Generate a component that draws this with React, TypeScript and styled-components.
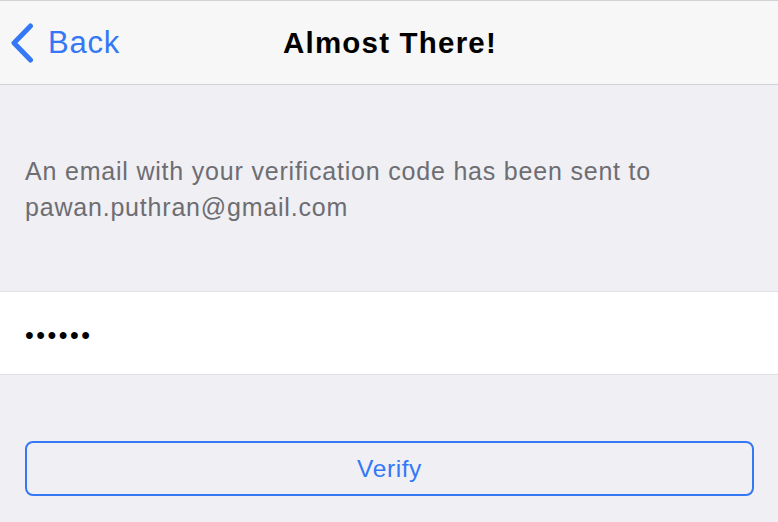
import React from 'react';
import styled, { createGlobalStyle } from 'styled-components';

const colors = {
  blue: '#3478f6',
  navBg: '#f7f7f7',
  pageBg: '#efeff4',
  hairline: '#d2d2d6',
  fieldLine: '#e0e0e4',
  grey: '#6d6d72',
};

const GlobalStyle = createGlobalStyle`
  html, body {
    margin: 0;
    padding: 0;
    background: ${colors.pageBg};
    font-family: 'Liberation Sans', Arial, sans-serif;
  }
`;

const Screen = styled.div`
  width: 778px;
  height: 522px;
  overflow: hidden;
  background: ${colors.pageBg};
  display: flex;
  flex-direction: column;
`;

const NavBar = styled.header`
  position: relative;
  height: 83px;
  background: ${colors.navBg};
  border-top: 1px solid ${colors.hairline};
  border-bottom: 1px solid ${colors.hairline};
  display: flex;
  align-items: center;
  justify-content: center;
`;

const BackButton = styled.button`
  position: absolute;
  left: 10px;
  top: 22px;
  display: flex;
  align-items: center;
  gap: 13px;
  padding: 0;
  border: 0;
  background: none;
  color: ${colors.blue};
  font-family: inherit;
  font-size: 31px;
  letter-spacing: 0.8px;
  cursor: pointer;
`;

const Title = styled.h1`
  margin: 0;
  margin-left: 2px;
  font-size: 29.5px;
  letter-spacing: 1.2px;
  font-weight: bold;
  color: #000;
`;

const Message = styled.p`
  margin: 0;
  padding: 68px 25px 0;
  height: 138px;
  box-sizing: border-box;
  font-size: 25px;
  letter-spacing: 0.8px;
  line-height: 36px;
  color: ${colors.grey};
`;

const FieldRow = styled.div`
  margin-top: 68px;
  height: 82px;
  background: #fff;
  border-top: 1px solid ${colors.fieldLine};
  border-bottom: 1px solid ${colors.fieldLine};
  display: flex;
  align-items: center;
  padding: 0 25px;
`;

const CodeInput = styled.input`
  flex: 1;
  border: 0;
  outline: none;
  background: transparent;
  font-family: inherit;
  font-size: 25px;
  letter-spacing: 2.5px;
  color: #000;
  padding: 4px 0 0;
`;

const Actions = styled.div`
  padding: 66px 25px 0;
`;

const VerifyButton = styled.button`
  width: 729px;
  height: 55px;
  border: 2px solid ${colors.blue};
  border-radius: 8px;
  background: transparent;
  color: ${colors.blue};
  font-family: inherit;
  font-size: 24.5px;
  letter-spacing: 0.6px;
  padding: 0;
  cursor: pointer;
`;

const Chevron = () => (
  <svg width="25" height="40" viewBox="0 0 25 40">
    <path d="M20.5 3 L4 20 L20.5 37" fill="none" stroke={colors.blue} strokeWidth="5" strokeLinecap="round" strokeLinejoin="round" />
  </svg>
);

export default function App() {
  return (
    <Screen>
      <GlobalStyle />
      <NavBar>
        <BackButton>
          <Chevron />
          Back
        </BackButton>
        <Title>Almost There!</Title>
      </NavBar>
      <Message>
        An email with your verification code has been sent to
        <br />
        pawan.puthran@gmail.com
      </Message>
      <FieldRow>
        <CodeInput type="password" defaultValue="123456" />
      </FieldRow>
      <Actions>
        <VerifyButton>Verify</VerifyButton>
      </Actions>
    </Screen>
  );
}
